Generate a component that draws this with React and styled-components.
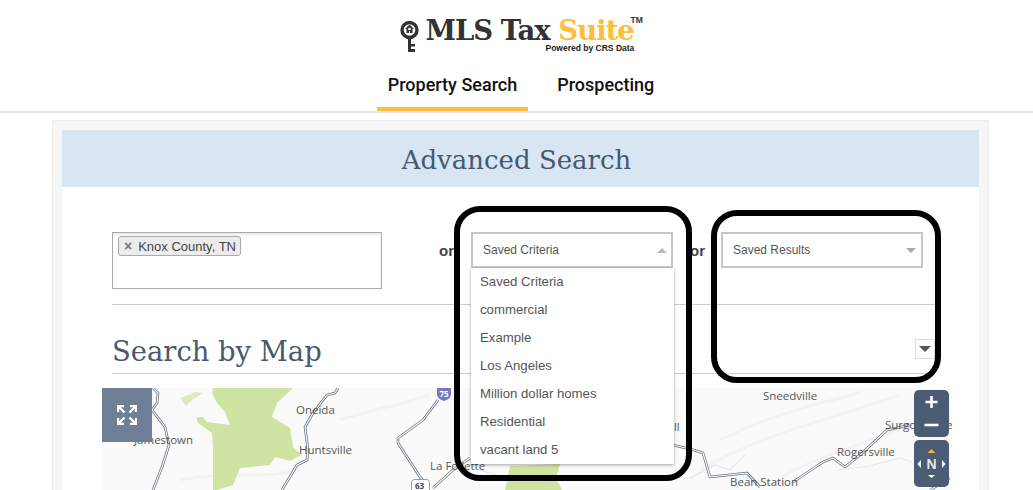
import styled, { createGlobalStyle } from 'styled-components';

const GlobalStyle = createGlobalStyle`
  html, body {
    margin: 0;
    background: #fff;
    font-family: "Liberation Sans", Arial, sans-serif;
  }
`;

const Page = styled.div`
  position: relative;
  width: 1033px;
  height: 490px;
  overflow: hidden;
`;

// top header
const Header = styled.header`
  height: 113px;
  display: flex;
  flex-direction: column;
  align-items: center;
  padding-left: 9px;
  box-sizing: border-box;
  border-bottom: 2px solid #e9e9e9;
`;

const Logo = styled.div`
  position: relative;
  height: 59px;
  width: 243px;
  display: flex;
  align-items: flex-start;
  gap: 7px;
  padding-top: 16px;
  box-sizing: border-box;
`;

const LogoName = styled.div`
  font-family: "DejaVu Serif", serif;
  font-weight: 700;
  font-size: 27.5px;
  line-height: 28px;
  letter-spacing: -1px;
  color: #333;
  white-space: nowrap;
`;

const LogoAccent = styled.span`
  color: #fbbe3d;
`;

const Trademark = styled.span`
  position: absolute;
  left: 231px;
  top: 16px;
  font-size: 8.5px;
  line-height: 9px;
  font-weight: 700;
  color: #333;
`;

const PoweredBy = styled.span`
  position: absolute;
  left: 146px;
  top: 44px;
  font-size: 8.5px;
  line-height: 9px;
  font-weight: 700;
  color: #222;
  white-space: nowrap;
`;

const Tabs = styled.nav`
  display: flex;
  gap: 18px;
  height: 52px;
`;

const Tab = styled.div`
  box-sizing: border-box;
  height: 52px;
  padding: 14px 11px 0;
  font-family: Roboto, sans-serif;
  font-weight: 500;
  font-size: 18px;
  line-height: 24px;
  color: #111;
  border-bottom: 4px solid ${(p) => (p.$active ? '#fbbe3d' : 'transparent')};
`;

// search panel
const Panel = styled.section`
  margin: 7px 44px 0 52px;
  padding: 9px 9px 0;
  background: #f6f6f6;
  border: 1px solid #eee;
  border-bottom: 0;
`;

const PanelInner = styled.div`
  background: #fff;
`;

const PanelTitle = styled.h1`
  margin: 0;
  height: 57px;
  padding-right: 8px;
  background: #d8e5f3;
  font-family: "DejaVu Serif", serif;
  font-weight: 400;
  font-size: 26px;
  line-height: 60px;
  text-align: center;
  color: #47596f;
`;

const PanelBody = styled.div`
  padding: 45px 44px 0 50px;
`;

const SearchRow = styled.div`
  display: flex;
  align-items: flex-start;
  padding-bottom: 15px;
  border-bottom: 1px solid #ccc;
`;

const TagBox = styled.div`
  box-sizing: border-box;
  width: 270px;
  height: 57px;
  padding: 3px 5px;
  border: 1px solid #aaa;
  box-shadow: inset 0 4px 4px -3px #ddd;
`;

const Tag = styled.span`
  display: inline-flex;
  align-items: center;
  box-sizing: border-box;
  height: 20px;
  padding: 0 0 0 5px;
  width: 123px;
  gap: 6px;
  font-size: 13px;
  color: #444;
  background: #ececec;
  border: 1px solid #aaa;
  border-radius: 3px;
`;

const TagClose = styled.span`
  font-size: 14px;
  font-weight: 700;
  color: #777;
`;

const OrLabel = styled.div`
  box-sizing: border-box;
  width: ${(p) => p.$width}px;
  padding-right: ${(p) => p.$right}px;
  height: 36px;
  line-height: 38px;
  text-align: right;
  font-size: 15px;
  font-weight: 700;
  color: #444;
`;

const Select = styled.div`
  position: relative;
  box-sizing: border-box;
  width: 202px;
  height: 36px;
  padding-left: 10px;
  display: flex;
  align-items: center;
  justify-content: space-between;
  font-size: 12px;
  color: #555;
  border: 2px solid #c6c6c6;
`;

const Caret = styled.span`
  width: 0;
  height: 0;
  margin-right: ${(p) => (p.$up ? '4px' : '5px')};
  border-left: 5px solid transparent;
  border-right: 5px solid transparent;
  border-top: ${(p) => (p.$up ? '0' : '5px solid #aaa')};
  border-bottom: ${(p) => (p.$up ? '5px solid #bbb' : '0')};
`;

const Menu = styled.ul`
  position: absolute;
  z-index: 2;
  left: -2px;
  top: 34px;
  width: 203px;
  margin: 0;
  padding: 0;
  list-style: none;
  background: #fff;
  box-shadow: 0 1px 3px rgba(0, 0, 0, 0.35);
`;

const MenuItem = styled.li`
  height: 28px;
  padding-left: 9px;
  font-size: 13.2px;
  line-height: 28px;
  color: #555;
`;

const SectionHead = styled.div`
  display: flex;
  align-items: flex-end;
  justify-content: space-between;
  height: 69px;
  padding-bottom: 14px;
  box-sizing: border-box;
  border-bottom: 1px solid #ccc;
`;

const SectionTitle = styled.h2`
  margin: 0 0 -13px;
  font-family: "DejaVu Serif", serif;
  font-weight: 400;
  font-size: 27.4px;
  line-height: 40px;
  color: #47596f;
`;

const Collapse = styled.div`
  box-sizing: border-box;
  width: 20px;
  height: 20px;
  display: flex;
  align-items: center;
  justify-content: center;
  border: 1px solid #ddd;
`;

const CollapseCaret = styled.span`
  width: 0;
  height: 0;
  border-left: 6px solid transparent;
  border-right: 6px solid transparent;
  border-top: 6px solid #555;
`;

// map
const MapArea = styled.div`
  position: relative;
  height: 102px;
  margin: 14px -17px 0 -10px;
  background: #fafafa;
  overflow: hidden;
`;

const MapDrawing = styled.svg`
  display: block;
  font-family: "Open Sans", sans-serif;
  font-size: 11.5px;
`;

const Fullscreen = styled.div`
  position: absolute;
  left: 0;
  top: 0;
  width: 50px;
  height: 54px;
  display: flex;
  align-items: center;
  justify-content: center;
  background: #6f7f95;
`;

const ControlBox = styled.div`
  position: absolute;
  left: 812px;
  top: ${(p) => p.$top}px;
  width: 35px;
  height: 47px;
  border-radius: 5px;
  background: #4b5c74;
`;

const Annotation = styled.div`
  position: absolute;
  z-index: 3;
  box-sizing: border-box;
  left: ${(p) => p.$left}px;
  top: ${(p) => p.$top}px;
  width: ${(p) => p.$width}px;
  height: ${(p) => p.$height}px;
  border: 6px solid #000;
  border-radius: 26px;
  pointer-events: none;
`;

const savedCriteria = [
  'Saved Criteria',
  'commercial',
  'Example',
  'Los Angeles',
  'Million dollar homes',
  'Residential',
  'vacant land 5',
];

const roads = [
  'M153 388 L158 393 L157 403 L152 410 L165 427 L169 445 L162 467 L153 490',
  'M338 388 L335 393 L327 395 L313 413 L305 427 L308 450 L307 460 L297 465 L282 490',
  'M438 400 L423 420 L398 438 L398 443 L420 477 L423 480',
  'M433 488 L453 470 L470 458',
  'M673 445 L694 450 L703 453 L710 477 L747 473 L760 487',
  'M793 482 L823 462 L833 458 L845 467 L860 455 L887 430 L910 425',
  'M930 490 L950 478',
];

const labels = [
  ['Jamestown', 134, 444],
  ['Oneida', 296, 414],
  ['Huntsville', 299, 454],
  ['La Follette', 430, 470],
  ['Tazewell', 634, 431],
  ['Sneedville', 763, 400],
  ['Surgoinsville', 885, 429],
  ['Rogersville', 837, 456],
  ['Bean Station', 730, 486],
];

function KeyIcon() {
  return (
    <svg width="19" height="33" viewBox="0 0 19 33" style={{ marginTop: 4, flex: 'none' }}>
      <circle cx="9.5" cy="10" r="7.5" fill="none" stroke="#333" strokeWidth="3.4" />
      <path d="M9.5 4.5 L14 9 L12.5 9 L12.5 13 L6.5 13 L6.5 9 L5 9 Z" fill="#333" />
      <circle cx="9.5" cy="9" r="1.3" fill="#fff" />
      <path d="M9 11 h1 v3 h-1 Z" fill="#fff" />
      <path d="M8 18 h3 v6 h4 v2.5 h-4 v2.5 h4 v3 h-7 Z" fill="#333" />
    </svg>
  );
}

function MapPicture() {
  return (
    <MapDrawing width="850" height="102" viewBox="102 388 850 102">
      <g fill="none" stroke="#f2f4f4" strokeWidth="3">
        <path d="M700 470 C770 430 830 420 900 395" />
        <path d="M720 440 C780 410 820 405 860 392" />
        <path d="M780 478 C830 450 880 440 950 410" />
        <path d="M180 480 C230 470 260 480 300 470" />
        <path d="M340 420 C370 410 400 405 430 395" />
      </g>
      <g fill="none" stroke="#dce9f1" strokeWidth="1.2">
        <path d="M690 478 L715 465 L730 470 L745 455" />
        <path d="M838 470 L870 466 L900 458 L912 462" />
        <path d="M480 470 L505 478 L520 470" />
      </g>
      <path
        fill="#cfe4a3"
        d="M213 388 L293 388 L277 403 L272 417 L290 428 L293 447 L302 455 L290 461 L275 457 L270 465 L240 468 L233 485 L217 490 L213 490 L213 447 L212 433 L197 422 L197 417 L203 417 L207 422 L230 425 L225 412 L217 403 L212 393 Z"
      />
      <path fill="#dcebbb" d="M180 398 L196 392 L203 393 L192 400 L186 406 Z" />
      <path fill="#cfe4a3" d="M510 466 L560 464 L556 478 L562 490 L505 490 Z" />
      {roads.map((d) => (
        <g key={d} fill="none" strokeLinejoin="round">
          <path d={d} stroke="#68727e" strokeWidth="2.6" />
          <path d={d} stroke="#fff" strokeWidth="1.1" />
        </g>
      ))}
      <path d="M437 388 H451 V394 Q451 399 444 401 Q437 399 437 394 Z" fill="#7676b8" />
      <text x="439.5" y="397" fontSize="8" fontWeight="700" fill="#fff">75</text>
      <rect x="411.5" y="479.5" width="18" height="16" rx="3" fill="#fff" stroke="#999" />
      <text x="415" y="489" fontSize="8" fontWeight="700" fill="#444">63</text>
      {labels.map(([name, x, y]) => (
        <text key={name} x={x} y={y} fill="#555">{name}</text>
      ))}
    </MapDrawing>
  );
}

function MapControls() {
  return (
    <>
      <Fullscreen>
        <svg width="20" height="20" viewBox="0 0 20 20" fill="none" stroke="#fff" strokeWidth="2.4">
          <path d="M1 7 V1 H7 M1 1 L7.5 7.5" />
          <path d="M19 7 V1 H13 M19 1 L12.5 7.5" />
          <path d="M1 13 V19 H7 M1 19 L7.5 12.5" />
          <path d="M19 13 V19 H13 M19 19 L12.5 12.5" />
        </svg>
      </Fullscreen>
      <ControlBox $top={2}>
        <svg width="35" height="47" viewBox="0 0 35 47" stroke="#fff" strokeWidth="2.6">
          <path d="M17.5 6 V18 M11.5 12 H23.5" />
          <path d="M10.5 35 H24.5" />
        </svg>
      </ControlBox>
      <ControlBox $top={52}>
        <svg width="35" height="47" viewBox="0 0 35 47">
          <path d="M13.5 13 L17.5 9 L21.5 13 Z" fill="#e5b53f" />
          <path d="M14 35 L17.5 38 L21 35 Z" fill="#fff" />
          <path d="M7 20 L3.5 24 L7 28 Z" fill="#fff" />
          <path d="M28 20 L31.5 24 L28 28 Z" fill="#fff" />
          <text x="17.5" y="29" textAnchor="middle" fontFamily="Liberation Sans" fontWeight="700" fontSize="14" fill="#e6e9ee">N</text>
        </svg>
      </ControlBox>
    </>
  );
}

export default function App() {
  return (
    <Page>
      <GlobalStyle />
      <Header>
        <Logo>
          <KeyIcon />
          <LogoName>
            MLS Tax <LogoAccent>Suite</LogoAccent>
          </LogoName>
          <Trademark>TM</Trademark>
          <PoweredBy>Powered by CRS Data</PoweredBy>
        </Logo>
        <Tabs>
          <Tab $active>Property Search</Tab>
          <Tab>Prospecting</Tab>
        </Tabs>
      </Header>

      <Panel>
        <PanelInner>
          <PanelTitle>Advanced Search</PanelTitle>
          <PanelBody>
            <SearchRow>
              <TagBox>
                <Tag>
                  <TagClose>×</TagClose>
                  Knox County, TN
                </Tag>
              </TagBox>
              <OrLabel $width={89} $right={17}>or</OrLabel>
              <Select>
                Saved Criteria
                <Caret $up />
                <Menu>
                  {savedCriteria.map((item) => (
                    <MenuItem key={item}>{item}</MenuItem>
                  ))}
                </Menu>
              </Select>
              <OrLabel $width={48} $right={16}>or</OrLabel>
              <Select>
                Saved Results
                <Caret />
              </Select>
            </SearchRow>
            <SectionHead>
              <SectionTitle>Search by Map</SectionTitle>
              <Collapse>
                <CollapseCaret />
              </Collapse>
            </SectionHead>
            <MapArea>
              <MapPicture />
              <MapControls />
            </MapArea>
          </PanelBody>
        </PanelInner>
      </Panel>

      <Annotation $left={454} $top={206} $width={238} $height={275} />
      <Annotation $left={711} $top={210} $width={230} $height={173} />
    </Page>
  );
}
